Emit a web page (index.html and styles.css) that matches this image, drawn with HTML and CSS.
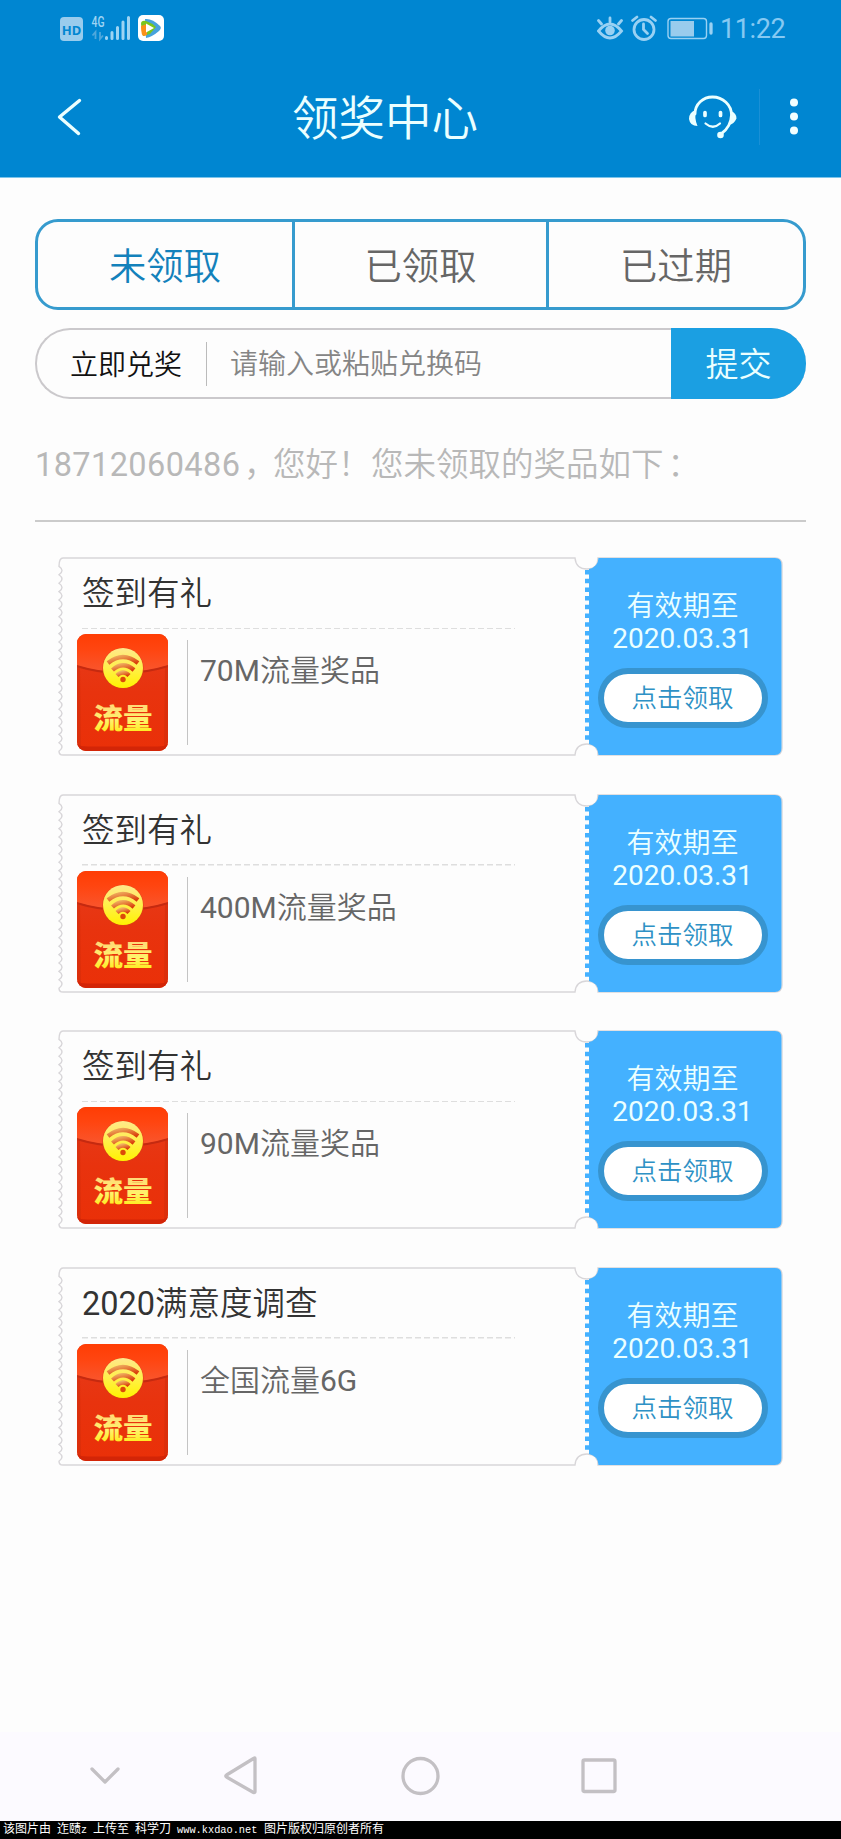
FILE: index.html
```html
<!DOCTYPE html>
<html lang="zh-CN">
<head>
<meta charset="utf-8">
<title>领奖中心</title>
<link rel="stylesheet" href="styles.css">
</head>
<body>
<svg class="defs" width="0" height="0" aria-hidden="true">
  <defs>
    <linearGradient id="red" x1="0" y1="0" x2="0" y2="1"><stop offset="0" stop-color="#e63c1c"/><stop offset=".5" stop-color="#e8330e"/><stop offset="1" stop-color="#ea3008"/></linearGradient>
    <linearGradient id="flap" x1="0" y1="0" x2="0" y2="1"><stop offset="0" stop-color="#ff3d04"/><stop offset=".4" stop-color="#ff4510"/><stop offset="1" stop-color="#f9562e"/></linearGradient>
    <linearGradient id="coin" x1="0" y1="0" x2="0" y2="1"><stop offset="0" stop-color="#ffe88c"/><stop offset=".5" stop-color="#fff04a"/><stop offset="1" stop-color="#fff200"/></linearGradient>
    <linearGradient id="wifi" x1="0" y1="0" x2="1" y2="1"><stop offset="0" stop-color="#f0b060"/><stop offset="1" stop-color="#d93a08"/></linearGradient>
    <linearGradient id="gold" x1="0" y1="0" x2="0" y2="1"><stop offset=".2" stop-color="#ffd978"/><stop offset=".6" stop-color="#fff36a"/><stop offset="1" stop-color="#ffe900"/></linearGradient>
    <clipPath id="env"><rect width="91" height="117" rx="9"/></clipPath>
    <symbol id="packet" viewBox="0 0 91 117">
      <g clip-path="url(#env)">
        <rect width="91" height="117" fill="url(#red)"/>
        <path d="M0 32Q45 46 91 32" fill="none" stroke="#c52a10" stroke-width="2.500"/>
        <path d="M0 0H91V31Q45 45 0 31Z" fill="url(#flap)"/>
        <path d="M0 31V117H4L3 34ZM91 31V117H87L88 34Z" fill="#cf2d0c" opacity=".55"/>
        <path d="M0 117V110Q3 112.500 10 112.500H81Q88 112.500 91 110V117Z" fill="#d32507"/>
      </g>
      <circle cx="46" cy="34.500" r="20.800" fill="#d94114" opacity=".6"/>
      <circle cx="46" cy="34" r="20" fill="url(#coin)"/>
      <g fill="none" stroke="url(#wifi)" stroke-width="4.300"><path d="M31 29Q46 17 61 29"/><path d="M35.500 36Q46 26.500 57 36"/><path d="M40 41.500Q46 35.500 52 41.500"/></g>
      <circle cx="46" cy="45.500" r="2.700" fill="#dc4a08"/>
      <text class="packet-text" x="46" y="94.500" text-anchor="middle" fill="url(#gold)" textLength="59" lengthAdjust="spacingAndGlyphs">流量</text>
    </symbol>
    <symbol id="ticket" viewBox="0 0 726 201">
      <path d="M5 1H517Q518 12 529 12Q540 12 540 1H717Q724 1 724 8V191Q724 198 717 198H540Q540 187 529 187Q518 187 517 198H5Q1 198 1 194.200q6-4.200 0-8.400q6-4.200 0-8.400q6-4.200 0-8.400q6-4.200 0-8.400q6-4.200 0-8.400q6-4.200 0-8.400q6-4.200 0-8.400q6-4.200 0-8.400q6-4.200 0-8.400q6-4.200 0-8.400q6-4.200 0-8.400q6-4.200 0-8.400q6-4.200 0-8.400q6-4.200 0-8.400q6-4.200 0-8.400q6-4.200 0-8.400q6-4.200 0-8.400q6-4.200 0-8.400q6-4.200 0-8.400q6-4.200 0-8.400q6-4.200 0-8.400q6-4.200 0-8.400Q1 1 5 1Z" fill="#fdfdfd" stroke="#d8d6d9" stroke-width="1.400"/>
      <path d="M540.500 1H717Q723.500 1 723.500 8V191Q723.500 198 717 198H540.500Q540 189 531 187V12Q540 10 540.500 1Z" fill="#44b1ff"/>
      <path d="M529.500 13V187" stroke="#44b1ff" stroke-width="5" stroke-dasharray="4.500 4.200"/>
    </symbol>
  </defs>
</svg>

<header class="header">
  <div class="status">
    <svg class="status-left" width="110" height="30" viewBox="0 0 110 30">
      <rect x="2" y="3" width="23" height="24" rx="4" fill="#99cced"/>
      <text class="hd" x="13.500" y="20.500" text-anchor="middle" textLength="19.500" lengthAdjust="spacingAndGlyphs">HD</text>
      <text class="net" x="33.500" y="13" textLength="13" lengthAdjust="spacingAndGlyphs">4G</text>
      <path d="M37.500 25V18l-3 3.500M42 18v7l3-3.500" fill="none" stroke="#4fa8dc" stroke-width="1.800"/>
      <path d="M48.500 23.500v1M54 18.500v6M59.500 13.500v11M65 8v16.500M70.500 3.500v21" stroke="#9ed4f3" stroke-width="3" stroke-linecap="round"/>
      <rect x="80" y="1" width="26" height="26" rx="5" fill="#fff"/>
      <path d="M87 5Q94 4 102 12Q104 14 101 17Q94 23 88 24Z" fill="#46a2dc"/>
      <path d="M83 10Q83 6 88 7Q94 9 98 13L92 20L85 22Z" fill="#79c51e"/>
      <path d="M83 12L89 10V21L86 22Q83 22 83 12Z" fill="#fb9019"/>
      <path d="M88 9.500L96 14L88 18.500Z" fill="#fff"/>
    </svg>
    <div class="status-right">
      <svg width="122" height="28" viewBox="0 0 122 28" fill="none" stroke="#99d1f3" stroke-width="2.800">
        <path d="M1.500 17Q13 3 24.500 17Q13 31 1.500 17Z"/><circle cx="13" cy="16.500" r="4.800" fill="#99d1f3" stroke="none"/><path d="M13 8V4M4.500 10L1.500 6.500M21.500 10l3-3.500" stroke-linecap="round"/>
        <circle cx="47" cy="15.500" r="10"/><path d="M46.500 10v5.500l4 4M35.500 6.500l4.500-3.500M58.500 6.500l-4.500-3.500" stroke-linecap="round"/>
        <rect x="71" y="4.500" width="38.500" height="20" rx="3" stroke-width="1.400"/><path d="M73.500 7H97V22.500H73.500Z" fill="#99cced" stroke="none"/><path d="M114 10V19" stroke-width="3.300" stroke-linecap="round"/>
      </svg>
      <span class="clock">11:22</span>
    </div>
  </div>
  <div class="titlebar">
    <svg class="back" width="26" height="40" viewBox="0 0 26 40"><path d="M22.500 3.500L2.500 20L21.500 36.500" fill="none" stroke="#ebffff" stroke-width="3.400" stroke-linecap="round" stroke-linejoin="round"/></svg>
    <h1 class="title">领奖中心</h1>
    <svg class="service" width="50" height="46" viewBox="0 0 50 46" fill="none" stroke="#ebffff" stroke-width="2.800" stroke-linecap="round">
      <path d="M7 20C7 10 15 3 24.500 3C35 3 43.500 11 43.500 21Q43 33 33 40"/>
      <path d="M8 16Q1 18 1 25Q2 32 9.500 32Q6 24 8 16ZM43 17Q48.500 19 48.500 24.500Q46 30 41 31Q44 24 43 17Z" fill="#ebffff" stroke="none"/>
      <circle cx="32.500" cy="41" r="3.300" fill="#ebffff" stroke="none"/>
      <path d="M17 18.500v3M32.500 18.500v3" stroke-width="3.700"/><path d="M17.500 29.500Q25 36 32 29.500" stroke-width="2.200"/>
    </svg>
    <span class="bar-divider"></span>
    <svg class="more" width="10" height="38" viewBox="0 0 10 38" fill="#f2ffff"><circle cx="5" cy="4.500" r="4"/><circle cx="5" cy="18.500" r="4"/><circle cx="5" cy="32.500" r="4"/></svg>
  </div>
</header>

<main class="main">
  <nav class="tabs"><span class="tab active">未领取</span><span class="tab">已领取</span><span class="tab">已过期</span></nav>
  <div class="redeem"><span class="redeem-label">立即兑奖</span><span class="redeem-input">请输入或粘贴兑换码</span><span class="submit">提交</span></div>
  <p class="greeting"><span class="phone">18712060486</span><span class="comma">，</span><span class="hello">您好！</span><span class="note">您未领取的奖品如下<span class="colon">：</span></span></p>
  <section class="list">
    <article class="ticket"><svg class="ticket-bg" viewBox="0 0 726 201"><use href="#ticket"/></svg>
      <div class="info"><h2>签到有礼</h2><div class="prize"><svg class="packet" viewBox="0 0 91 117"><use href="#packet"/></svg><p><b>70M</b>流量奖品</p></div></div>
      <div class="side"><span>有效期至</span><span class="date">2020.03.31</span><span class="claim">点击领取</span></div></article>
    <article class="ticket"><svg class="ticket-bg" viewBox="0 0 726 201"><use href="#ticket"/></svg>
      <div class="info"><h2>签到有礼</h2><div class="prize"><svg class="packet" viewBox="0 0 91 117"><use href="#packet"/></svg><p><b>400M</b>流量奖品</p></div></div>
      <div class="side"><span>有效期至</span><span class="date">2020.03.31</span><span class="claim">点击领取</span></div></article>
    <article class="ticket"><svg class="ticket-bg" viewBox="0 0 726 201"><use href="#ticket"/></svg>
      <div class="info"><h2>签到有礼</h2><div class="prize"><svg class="packet" viewBox="0 0 91 117"><use href="#packet"/></svg><p><b>90M</b>流量奖品</p></div></div>
      <div class="side"><span>有效期至</span><span class="date">2020.03.31</span><span class="claim">点击领取</span></div></article>
    <article class="ticket"><svg class="ticket-bg" viewBox="0 0 726 201"><use href="#ticket"/></svg>
      <div class="info"><h2><b>2020</b>满意度调查</h2><div class="prize"><svg class="packet" viewBox="0 0 91 117"><use href="#packet"/></svg><p>全国流量<b>6G</b></p></div></div>
      <div class="side"><span>有效期至</span><span class="date">2020.03.31</span><span class="claim">点击领取</span></div></article>
  </section>
</main>

<footer class="navbar">
  <svg width="841" height="89" viewBox="0 0 841 89" fill="none" stroke="#c3c0c4" stroke-width="3.300" stroke-linecap="round" stroke-linejoin="round">
    <path d="M92 37L105 50L118 37"/><path d="M255 26.500V59.500Q255 61 253.500 60.500L226.500 45Q225 44 226.500 43L253.500 26.500Q255 25.500 255 26.500Z"/><circle cx="420.500" cy="44" r="17.500"/><rect x="583" y="28" width="32" height="31.500" rx="1.500"/>
  </svg>
</footer>
<div class="credit"><span>该图片由</span><span>迮赜<i>z</i></span><span>上传至</span><span>科学刀</span><span class="url">www.kxdao.net</span><span>图片版权归原创者所有</span></div>
</body>
</html>
```
FILE: styles.css
```css
* { box-sizing: border-box; }
body { margin: 0; width: 841px; height: 1839px; display: flex; flex-direction: column; background: #fdfdfd; font-family: Roboto, "Noto Sans CJK SC", sans-serif; font-weight: 350; color: #333; overflow: hidden; }
h1, h2, p { margin: 0; font-weight: 350; }
b { font-weight: 400; }
.defs { position: absolute; }
.header { height: 178px; background: #0086d1; border-bottom: 1px solid #7cc4ea; }
.status { height: 57px; display: flex; justify-content: space-between; padding: 14px 55px 0 58px; }
.status-right { display: flex; height: 30px; }
.status-right svg { flex: none; }
.clock { width: 66px; margin-left: 1px; font-size: 27px; line-height: 31px; font-weight: 400; color: #86c9f2; letter-spacing: -.4px; }
.hd { font: 700 13px "Noto Sans"; fill: #0086d1; }
.net { font: 500 14px Roboto; fill: #9ed4f3; }
.titlebar { height: 120px; display: flex; align-items: center; }
.back { margin-left: 57px; }
.title { width: 200px; margin-left: 202px; padding-top: 3px; text-align: center; font-size: 46.500px; line-height: 60px; color: #ebffff; white-space: nowrap; }
.service { margin-left: 203px; }
.bar-divider { width: 1px; height: 56px; margin-left: 21px; background: #1a90d6; }
.more { margin-left: 29px; }
.main { height: 1554px; padding: 41px 35px 0; }
.tabs { height: 91px; display: grid; grid-template-columns: 254px 254px 1fr; padding-bottom: 1px; border: 3px solid #369bce; border-radius: 23px; }
.tab { border-left: 3px solid #369bce; margin-bottom: -1px; padding-bottom: 2px; display: flex; align-items: center; justify-content: center; font-size: 37.300px; color: #666; }
.tab.active { border-left: 0; color: #1381bb; }
.redeem { height: 71px; margin-top: 18px; display: flex; align-items: center; border: 2px solid #cbc9cc; border-right: 0; border-radius: 35px; }
.redeem-label { width: 170px; height: 44px; padding-left: 33px; border-right: 1px solid #bbb; font-size: 28px; line-height: 48px; color: #111; }
.redeem-input { flex: 1; padding-left: 23px; font-size: 28px; line-height: 47px; padding-top: 1px; color: #858585; }
.submit { width: 135px; height: 71px; flex: none; border-radius: 0 35px 35px 0; background: #1b9fe2; color: #ebffff; font-size: 33px; line-height: 74px; text-align: center; }
.greeting { height: 123px; border-bottom: 2px solid #cbcbcb; display: flex; padding-top: 42px; font-size: 32.500px; line-height: 49px; color: #b8b8b8; white-space: nowrap; }
.phone { width: 209px; letter-spacing: .4px; font-weight: 400; }
.comma { width: 29px; }
.hello { width: 98px; }
.colon { margin-left: 4px; }
.list { padding: 35px 0 0 23px; display: grid; gap: 35.600px; }
.ticket { position: relative; width: 726px; height: 201px; display: flex; }
.ticket-bg { position: absolute; inset: 0; width: 726px; height: 201px; }
.info { position: relative; width: 530px; padding: 13px 0 0 19px; }
.info h2 { width: 433px; height: 59px; margin-left: 5px; background: repeating-linear-gradient(90deg, #dedede 0 6px, transparent 6px 9px) 0 100% / 100% 1.500px no-repeat; font-size: 32.500px; line-height: 48px; color: #333; }
.prize { display: flex; margin-top: 5px; }
.packet { width: 91px; height: 117px; flex: none; }
.packet-text { font: 900 28px "Noto Sans CJK SC"; }
.prize p { height: 105px; margin: 6px 0 0 19px; padding-left: 12px; border-left: 1px solid #c4c4c4; font-size: 30px; line-height: 62px; color: #666; }
.side { position: relative; flex: 1; display: flex; flex-direction: column; align-items: center; padding-top: 33px; padding-right: 7px; font-size: 28px; line-height: 33px; color: #ebffff; }
.date { font-weight: 400; font-size: 28px; line-height: 32px; }
.claim { width: 170px; height: 60px; margin-top: 13px; border: 6px solid #3794cf; border-radius: 30px; background: #fff; color: #2e91c5; font-size: 25.500px; line-height: 49px; text-align: center; }
.navbar { height: 89px; background: #fcfaff; }
.credit { height: 18px; background: #000; color: #fff; display: flex; gap: 6px; padding-left: 3px; font: 400 12px/18px "Liberation Mono", "Noto Sans CJK SC", monospace; white-space: nowrap; }
.credit i { font-style: normal; font-size: 10px; }
.credit .url { width: 81px; font-size: 10.300px; }
```
